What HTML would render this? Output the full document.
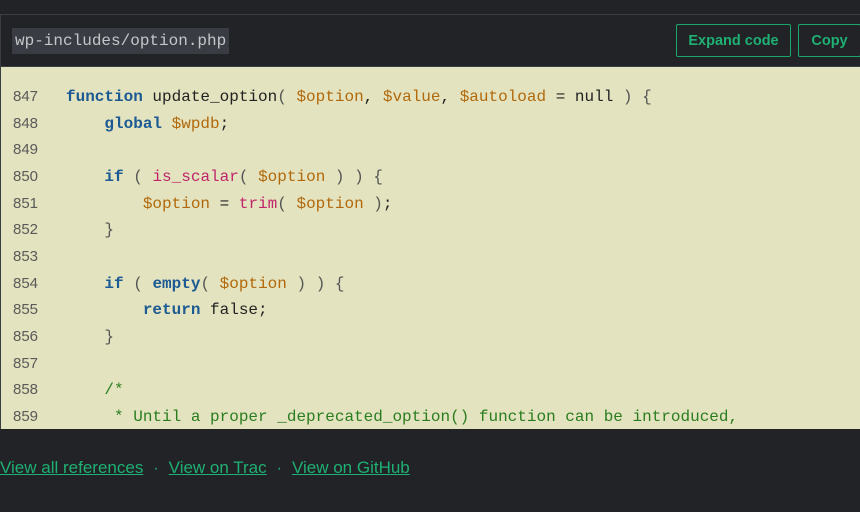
<!DOCTYPE html>
<html><head><style>
body{margin:0;background:#212327;width:860px;height:512px;overflow:hidden;font-family:"Liberation Sans",sans-serif}
.box{position:absolute;left:0;top:14px;width:859px;height:413px;border:1px solid #3a3d42;border-right:none}
.hdr{height:51px;background:#212327;position:relative}
.fn{position:absolute;left:11px;top:13px;height:26px;padding:0 3px;background:#393c42;color:#c4c6c9;font-family:"Liberation Mono",monospace;font-size:16px;line-height:26px}
.btn{position:absolute;top:9px;height:31px;border:1px solid #1aa76c;border-radius:2px;color:#1fb073;font-weight:bold;font-size:14.5px;line-height:32px;text-align:center}
.code{background:#e3e3bf;height:362px;position:relative;overflow:hidden;border-top:1px solid #3a3d42}
.l{position:absolute;left:0;width:860px;height:27px;line-height:27px;white-space:pre}
.n{position:absolute;left:12px;top:1px;color:#5a5a5a;font-size:15px;line-height:27px}
.c{position:absolute;left:65px;top:2px;font-family:"Liberation Mono",monospace;font-size:16px;line-height:27px;color:#222}
.k{color:#1b5a92;font-weight:bold}.v{color:#b1690c}.f{color:#c0256a}.m{color:#2a7d1f}.p{color:#555}
.links{position:absolute;left:0;top:458px;font-size:17px;line-height:20px;color:#1fb073}
.links a{color:#1fb073;text-decoration:underline}
.links span{margin:0 10px;color:#1fb073;font-size:16px}
</style></head><body>
<div class="box">
<div class="hdr"><div class="fn">wp-includes/option.php</div>
<div class="btn" style="left:675px;width:113px">Expand code</div>
<div class="btn" style="left:797px;width:61px">Copy</div></div>
<div class="code">
<div class="l" style="top:15px"><span class="n">847</span><span class="c"><span class="k">function</span> update_option<span class="p">(</span> <span class="v">$option</span>, <span class="v">$value</span>, <span class="v">$autoload</span> = null <span class="p">) {</span></span></div>
<div class="l" style="top:42px"><span class="n">848</span><span class="c">    <span class="k">global</span> <span class="v">$wpdb</span>;</span></div>
<div class="l" style="top:68px"><span class="n">849</span></div>
<div class="l" style="top:95px"><span class="n">850</span><span class="c">    <span class="k">if</span> <span class="p">(</span> <span class="f">is_scalar</span><span class="p">(</span> <span class="v">$option</span> <span class="p">) ) {</span></span></div>
<div class="l" style="top:122px"><span class="n">851</span><span class="c">        <span class="v">$option</span> = <span class="f">trim</span><span class="p">(</span> <span class="v">$option</span> <span class="p">)</span>;</span></div>
<div class="l" style="top:148px"><span class="n">852</span><span class="c">    <span class="p">}</span></span></div>
<div class="l" style="top:175px"><span class="n">853</span></div>
<div class="l" style="top:202px"><span class="n">854</span><span class="c">    <span class="k">if</span> <span class="p">(</span> <span class="k">empty</span><span class="p">(</span> <span class="v">$option</span> <span class="p">) ) {</span></span></div>
<div class="l" style="top:228px"><span class="n">855</span><span class="c">        <span class="k">return</span> false;</span></div>
<div class="l" style="top:255px"><span class="n">856</span><span class="c">    <span class="p">}</span></span></div>
<div class="l" style="top:282px"><span class="n">857</span></div>
<div class="l" style="top:308px"><span class="n">858</span><span class="c m">    /*</span></div>
<div class="l" style="top:335px"><span class="n">859</span><span class="c m">     * Until a proper _deprecated_option() function can be introduced,</span></div>
</div></div>
<div class="links"><a>View all references</a><span>·</span><a>View on Trac</a><span>·</span><a>View on GitHub</a></div>
</body></html>
